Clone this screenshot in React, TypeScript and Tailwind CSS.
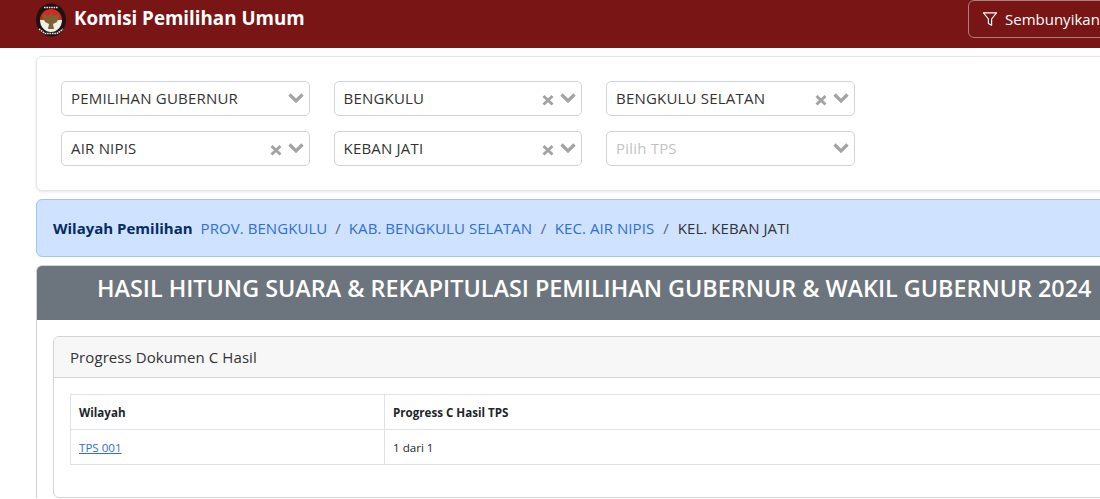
const font = { fontFamily: '"Open Sans", "Noto Sans", sans-serif' };

function Chevron() {
  return (
    <svg width="16" height="12" viewBox="0 0 16 12" className="shrink-0 mb-[1px]">
      <path d="M1.5 2.5 L8 9 L14.5 2.5" fill="none" stroke="#a3a3a3" strokeWidth="3.2" />
    </svg>
  );
}

function Cross() {
  return (
    <svg width="12" height="12" viewBox="0 0 12 12" className="shrink-0 mt-[3px]">
      <path d="M1.5 2 L10.5 10.5 M10.5 2 L1.5 10.5" fill="none" stroke="#a3a3a3" strokeWidth="3" />
    </svg>
  );
}

function Select({ value, placeholder, clear }: { value?: string; placeholder?: string; clear?: boolean }) {
  return (
    <div className="flex h-[35px] w-[248.5px] items-center rounded-[5px] border border-[#ced4da] bg-white pl-[9px] pr-[5px]">
      <span className={`flex-1 text-[15px] tracking-[0.2px] whitespace-nowrap ${value ? 'text-[#333]' : 'text-[#c4c4c4]'}`}>
        {value || placeholder}
      </span>
      <div className="flex items-center gap-[6px]">
        {clear && <Cross />}
        <Chevron />
      </div>
    </div>
  );
}

function Logo() {
  return (
    <svg width="32" height="34" viewBox="0 0 32 34" className="shrink-0">
      <ellipse cx="16" cy="17" rx="15" ry="16.5" fill="#1c1412" />
      <path d="M5 17 A11 11 0 0 1 27 17 Z" fill="#d8281f" />
      <path d="M5 17 A11 12 0 0 0 27 17 Z" fill="#f2efe9" />
      <path d="M16 9 L18 13 L25 11 L22 19 L18 21 L19 26 L13 26 L14 21 L10 19 L7 11 L14 13 Z" fill="#7d6236" />
      <path d="M9 4.5 H23 M4 26 L10 30.5 H22 L28 26" fill="none" stroke="#e8e4dc" strokeWidth="1.6" strokeDasharray="1.6 0.8" />
    </svg>
  );
}

export default function App() {
  return (
    <div className="h-screen w-screen overflow-hidden bg-white text-[#212529]" style={font}>
      <div className="w-[1240px]">
        <header className="flex h-[48px] items-start bg-[#7a1515] pl-[35px] pr-[40px]">
          <div className="flex w-[270px] items-center gap-[7px] pt-[3px]">
            <Logo />
            <span className="mb-[4px] whitespace-nowrap text-[18.75px] font-bold leading-[30px] text-white">Komisi Pemilihan Umum</span>
          </div>
          <button className="ml-[663px] flex h-[38px] w-[180px] items-center gap-[7px] rounded-[6px] border border-[#a98080] pl-[13px] text-[15px] text-white">
            <svg width="16" height="16" viewBox="0 0 16 16" fill="none" stroke="white" strokeWidth="1.2">
              <path d="M1.5 1.8 H14.5 L9.6 8 V14.2 L6.4 12.4 V8 Z" strokeLinejoin="round" />
            </svg>
            Sembunyikan
          </button>
        </header>

        <main className="pl-[36px] pt-[8px] pr-[40px]">
          <section className="flex h-[135px] flex-col gap-[15px] rounded-[6px] border border-[#e6e6e6] px-[24px] pt-[24px] shadow-[0_1px_3px_rgba(0,0,0,0.1)]">
            <div className="flex gap-[24px]">
              <Select value="PEMILIHAN GUBERNUR" />
              <Select value="BENGKULU" clear />
              <Select value="BENGKULU SELATAN" clear />
            </div>
            <div className="flex gap-[24px]">
              <Select value="AIR NIPIS" clear />
              <Select value="KEBAN JATI" clear />
              <Select placeholder="Pilih TPS" />
            </div>
          </section>

          <nav className="mt-[8px] flex h-[58px] items-center whitespace-nowrap rounded-[6px] border border-[#9ec5fe] bg-[#cfe2ff] pl-[16px] text-[15px] tracking-[0.06px]">
            <strong className="mr-[8px] font-bold tracking-normal text-[#052c65]">Wilayah Pemilihan</strong>
            <a className="text-[#2e6fd8]">PROV. BENGKULU</a>
            <span className="px-[8px] text-[#5c6670]">/</span>
            <a className="text-[#2e6fd8]">KAB. BENGKULU SELATAN</a>
            <span className="px-[8.5px] text-[#5c6670]">/</span>
            <a className="text-[#2e6fd8]">KEC. AIR NIPIS</a>
            <span className="px-[9px] text-[#5c6670]">/</span>
            <span className="text-[#333]">KEL. KEBAN JATI</span>
          </nav>

          <section className="mt-[8px] rounded-t-[6px] border border-b-0 border-[#d4d4d4]">
            <h1 className="flex h-[54px] items-center whitespace-nowrap rounded-t-[5px] bg-[#6c757d] pb-[8px] pl-[60px] text-[23.35px] font-semibold text-white">
              HASIL HITUNG SUARA &amp; REKAPITULASI PEMILIHAN GUBERNUR &amp; WAKIL GUBERNUR 2024
            </h1>
            <div className="px-[16px] pt-[16px]">
              <div className="rounded-[6px] border border-[#d4d4d4]">
                <div className="flex h-[41px] items-center rounded-t-[5px] border-b border-[#d4d4d4] bg-[#f7f7f7] pl-[16px] text-[15px] tracking-[0.08px] text-[#333]">
                  Progress Dokumen C Hasil
                </div>
                <div className="px-[16px] pb-[32px] pt-[16px]">
                  <table className="w-full border-collapse text-[11.6px] text-[#212529]">
                    <tbody>
                      <tr className="h-[35px]">
                        <th className="w-[314px] border border-[#dee2e6] px-[8px] pt-[2px] text-left font-bold">Wilayah</th>
                        <th className="border border-[#dee2e6] px-[8px] pt-[2px] text-left font-bold">Progress C Hasil TPS</th>
                      </tr>
                      <tr className="h-[35px]">
                        <td className="border border-[#dee2e6] px-[8px] pt-[2px]">
                          <a className="text-[#2e6fd8] underline">TPS 001</a>
                        </td>
                        <td className="border border-[#dee2e6] px-[8px] pt-[2px]">1 dari 1</td>
                      </tr>
                    </tbody>
                  </table>
                </div>
              </div>
            </div>
          </section>
        </main>
      </div>
    </div>
  );
}
